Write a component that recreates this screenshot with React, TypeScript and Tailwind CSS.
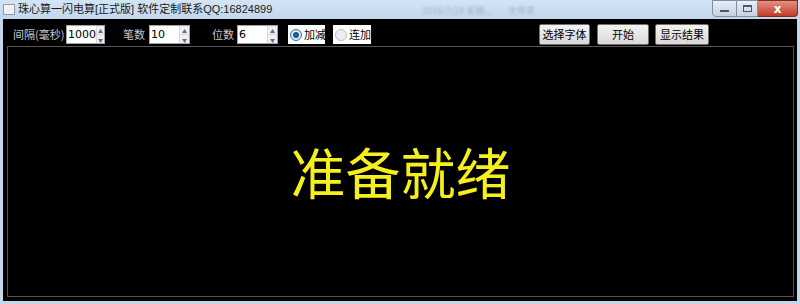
import React from "react";

const font = { fontFamily: '"Noto Sans CJK SC", "Noto Sans", sans-serif' };

function Spin({ value, w }: { value: string; w: string }) {
  return (
    <div className={`flex shrink-0 h-[19px] ${w} bg-white border border-[#9aa3ad]`}>
      <div className="flex-1 text-[11px] leading-[17px] pl-[1px] text-black" style={{ fontFamily: '"DejaVu Sans", sans-serif' }}>{value}</div>
      <div className="w-[10px] flex flex-col border-l border-[#d6dbe0] bg-[#eef0f3]">
        <div className="flex-1 flex items-center justify-center text-[5px] leading-none text-[#606a74] border-b border-[#d6dbe0]">▲</div>
        <div className="flex-1 flex items-center justify-center text-[5px] leading-none text-[#606a74]">▼</div>
      </div>
    </div>
  );
}

function Radio({ label, checked, w }: { label: string; checked?: boolean; w: string }) {
  return (
    <div className={`flex shrink-0 items-center gap-[2px] h-[19px] ${w} bg-white pl-[2px] whitespace-nowrap`}>
      <div className={`shrink-0 w-[12px] h-[12px] rounded-full border ${checked ? "border-[#3d6f9e] bg-[#d9ecfa]" : "border-[#b8bfc6] bg-[#eceff2]"} flex items-center justify-center`}>
        {checked && <div className="w-[6px] h-[6px] rounded-full bg-[#1c5b93]" />}
      </div>
      <span className="text-[11px] leading-none text-black">{label}</span>
    </div>
  );
}

function Btn({ label, w }: { label: string; w: string }) {
  return (
    <div className={`shrink-0 h-[21px] ${w} flex items-center justify-center border border-[#707070] rounded-[2px] bg-gradient-to-b from-[#f4f4f4] to-[#d8d8d8] text-[11px] text-black whitespace-nowrap`}>
      {label}
    </div>
  );
}

export default function App() {
  return (
    <div className="w-[800px] h-[304px] flex flex-col bg-[#c4d8ec] overflow-hidden" style={font}>
      <div className="h-[19px] flex items-start bg-gradient-to-b from-[#d4e4f3] to-[#c2d7ec] whitespace-nowrap">
        <div className="w-[12px] h-[11px] mt-[4px] ml-[3px] border border-[#8e9aa6] bg-[#eef2f6]" />
        <div className="ml-[3px] text-[11px] leading-[19px] text-[#1a1a1a]" style={{ fontFamily: '"Liberation Sans", "Noto Sans CJK SC", sans-serif' }}>
          珠心算一闪电算[正式版] 软件定制联系QQ:16824899
        </div>
        <div className="ml-[150px] mt-[4px] text-[9px] text-[#9fb2c6] blur-[1px]">2016/7/28 星期...&nbsp;&nbsp;&nbsp;&nbsp;&nbsp;&nbsp;&nbsp;&nbsp;文件夹</div>
        <div className="ml-auto flex h-[17px] mr-[2px]">
          <div className="w-[25px] flex items-end justify-center pb-[4px] border border-[#7d8fa3] rounded-bl-[4px] bg-gradient-to-b from-[#e7eef6] to-[#c3d2e2]">
            <div className="w-[9px] h-[2px] bg-[#4a5866]" />
          </div>
          <div className="w-[21px] flex items-center justify-center border-y border-r border-[#7d8fa3] bg-gradient-to-b from-[#e7eef6] to-[#c3d2e2]">
            <div className="w-[9px] h-[7px] border border-[#4a5866] border-t-2" />
          </div>
          <div className="w-[40px] flex items-center justify-center border-y border-r border-[#8a2a22] rounded-br-[4px] bg-gradient-to-b from-[#e3907f] to-[#c2392a] text-white text-[12px] font-bold leading-none" style={{ fontFamily: '"DejaVu Sans", sans-serif' }}>
            x
          </div>
        </div>
      </div>
      <div className="flex-1 mx-[3px] mb-[3px] bg-black flex flex-col">
        <div className="flex items-center h-[27px] pt-[4px] text-[11px] text-[#c8c8c8] whitespace-nowrap">
          <span className="shrink-0 ml-[10px] w-[53px]">间隔(毫秒)</span>
          <Spin value="1000" w="w-[39px]" />
          <span className="shrink-0 ml-[18px] w-[26px]">笔数</span>
          <Spin value="10" w="w-[41px]" />
          <span className="shrink-0 ml-[22px] w-[25px]">位数</span>
          <Spin value="6" w="w-[41px]" />
          <div className="shrink-0 ml-[10px]"><Radio label="加减" checked w="w-[37px]" /></div>
          <div className="shrink-0 ml-[8px]"><Radio label="连加" w="w-[38px]" /></div>
          <div className="shrink-0 ml-[168px]"><Btn label="选择字体" w="w-[51px]" /></div>
          <div className="shrink-0 ml-[7px]"><Btn label="开始" w="w-[52px]" /></div>
          <div className="shrink-0 ml-[6px]"><Btn label="显示结果" w="w-[54px]" /></div>
        </div>
        <div className="flex-1 ml-[4px] mr-[3px] mb-[4px] border border-[#5a5450] flex items-center justify-center">
          <span className="text-[55px] leading-none text-[#f5f01c] -mt-[2px]">准备就绪</span>
        </div>
      </div>
    </div>
  );
}
